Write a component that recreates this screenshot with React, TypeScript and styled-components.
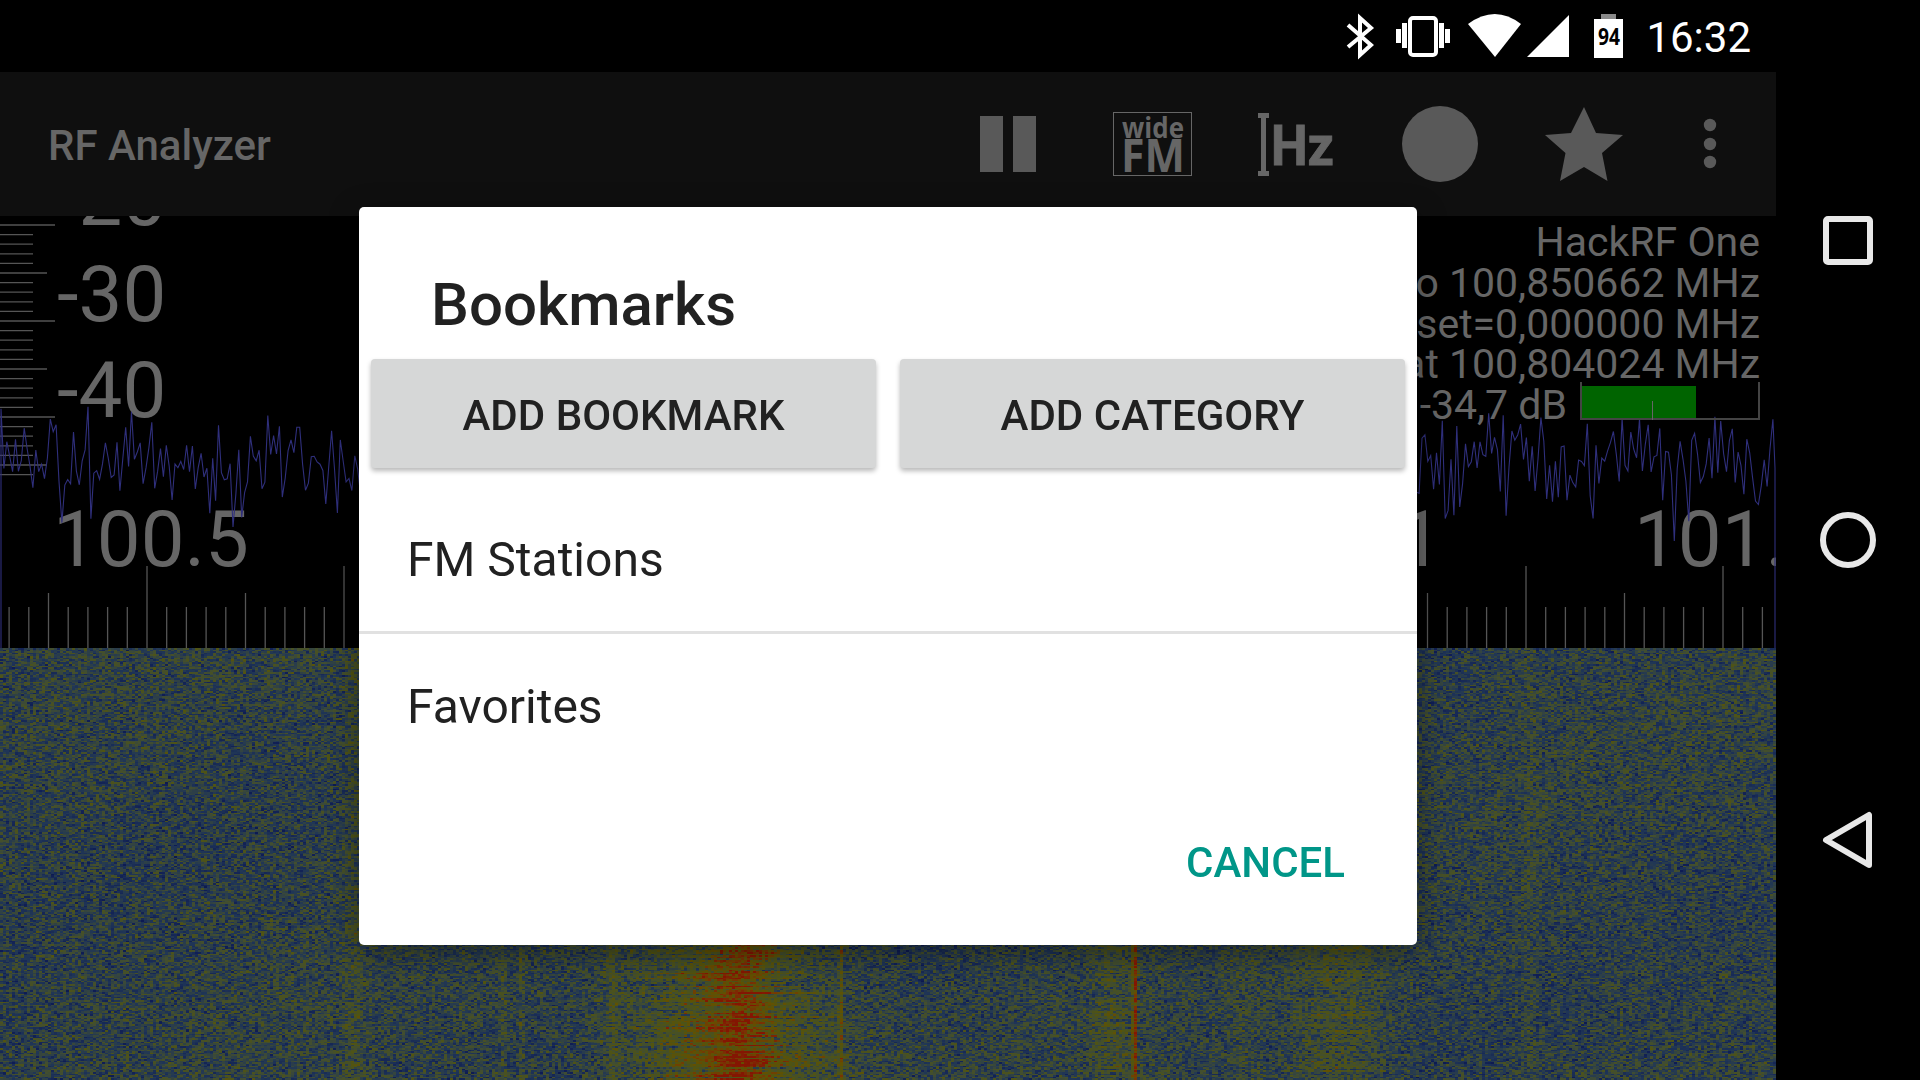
import React, { useEffect, useRef } from 'react'
import styled, { createGlobalStyle } from 'styled-components'

const GlobalStyle = createGlobalStyle`
  html, body {
    margin: 0;
    background: #000;
    overflow: hidden;
  }
`

const Screen = styled.div`
  position: relative;
  display: flex;
  width: 1920px;
  height: 1080px;
  background: #000;
  font-family: Roboto, 'Liberation Sans', sans-serif;
  overflow: hidden;
`
const Main = styled.div`
  display: flex;
  flex-direction: column;
  width: 1776px;
  height: 100%;
`
const StatusBar = styled.div`
  display: flex;
  align-items: center;
  justify-content: flex-end;
  height: 72px;
  padding-right: 25px;
`
const StatusIcon = styled.svg`
  display: block;
  height: 72px;
  fill: #fff;
`
const StatusTime = styled.span`
  margin-left: 22px;
  padding-top: 3px;
  font-size: 42px;
  line-height: 69px;
  color: #fff;
`
const BatteryText = styled.text`
  font-family: 'Open Sans', sans-serif;
  font-weight: 700;
  font-size: 23px;
  fill: #000;
`
const Toolbar = styled.div`
  display: flex;
  align-items: center;
  height: 144px;
  padding-right: 12px;
  background: #0f0f0f;
`
const ToolbarTitle = styled.div`
  flex: 1;
  padding: 3px 0 0 48px;
  font-size: 42px;
  font-weight: 500;
  color: #666;
`
const ActionIcon = styled.svg<{ $width?: number }>`
  display: block;
  width: ${({ $width }) => $width ?? 144}px;
  height: 144px;
  fill: #595959;
`
const WideText = styled.text`
  font-family: 'Open Sans', sans-serif;
  font-weight: 700;
  font-size: 29px;
  fill: #666;
`
const FmText = styled.text`
  font-family: 'Open Sans', sans-serif;
  font-weight: 700;
  font-size: 46px;
  fill: #666;
`
const HzText = styled.text`
  font-family: Roboto, sans-serif;
  font-weight: 700;
  font-size: 56px;
  fill: #666;
  stroke: #666;
  stroke-width: 1;
`
const Analyzer = styled.div`
  position: relative;
  height: 432px;
  overflow: hidden;
`
const Chart = styled.svg`
  display: block;
  width: 1776px;
  height: 432px;
`
const AxisLabel = styled.text`
  font-family: Roboto, sans-serif;
  font-size: 78px;
  fill: #666;
`
const InfoPanel = styled.div`
  position: absolute;
  top: 6px;
  right: 0;
  padding-right: 16px;
  font-size: 41px;
  line-height: 40.8px;
  color: #666;
  text-align: right;
  white-space: nowrap;
`
const InfoLine = styled.div`
  display: flex;
  justify-content: flex-end;
`
const Meter = styled.div`
  position: relative;
  box-sizing: border-box;
  width: 180px;
  height: 38px;
  margin-left: 13px;
  transform: translateY(-3px);
  border: 2px solid #444;
  border-top: 0;
  &::after {
    content: '';
    position: absolute;
    left: 70px;
    bottom: -2px;
    width: 1px;
    height: 19px;
    background: #666;
  }
`
const MeterFill = styled.div<{ $level: number }>`
  width: ${({ $level }) => $level}%;
  height: 32px;
  margin-top: 4px;
  background: #006400;
`
const Waterfall = styled.canvas`
  display: block;
  width: 1776px;
  height: 432px;
  image-rendering: pixelated;
`
const NavBar = styled.div`
  display: flex;
  flex-direction: column;
  justify-content: center;
  width: 144px;
`
const NavIcon = styled.svg`
  display: block;
  width: 144px;
  height: 300px;
  fill: none;
  stroke: #e8e8e8;
  stroke-width: 6;
  stroke-linejoin: round;
`
const Dialog = styled.div`
  position: absolute;
  left: 359px;
  top: 207px;
  width: 1058px;
  height: 738px;
  display: flex;
  flex-direction: column;
  background: #fff;
  border-radius: 5px;
  box-shadow: 0 8px 30px rgba(0, 0, 0, 0.4);
`
const DialogTitle = styled.div`
  padding: 56px 0 12px 72px;
  font-size: 60px;
  line-height: 84px;
  font-weight: 500;
  color: #212121;
`
const ButtonRow = styled.div`
  display: flex;
  gap: 24px;
  padding: 0 12px;
`
const RaisedButton = styled.div`
  flex: 1;
  display: flex;
  align-items: center;
  justify-content: center;
  box-sizing: border-box;
  height: 109px;
  padding-top: 4px;
  background: #d6d7d7;
  border-radius: 4px;
  box-shadow: 0 3px 5px rgba(0, 0, 0, 0.28);
  font-size: 42px;
  font-weight: 500;
  color: #212121;
`
const List = styled.div`
  margin-top: 19px;
`
const ListRow = styled.div`
  display: flex;
  align-items: center;
  height: 144px;
  padding-left: 48px;
  font-size: 48px;
  color: #212121;
  & + & {
    border-top: 3px solid #e1e1e1;
  }
`
const Footer = styled.div`
  flex: 1;
  display: flex;
  align-items: center;
  justify-content: flex-end;
  padding: 2px 72px 0 0;
`
const CancelButton = styled.div`
  font-size: 42px;
  font-weight: 500;
  color: #009688;
`

const random = (seed: number) => () => {
  seed = (seed + 0x6d2b79f5) | 0
  let t = Math.imul(seed ^ (seed >>> 15), 1 | seed)
  t = (t + Math.imul(t ^ (t >>> 7), 61 | t)) ^ t
  return ((t ^ (t >>> 14)) >>> 0) / 4294967296
}

const ramp: [number, number, number, number][] = [
  [0, 6, 10, 50],
  [0.25, 14, 28, 84],
  [0.42, 32, 54, 86],
  [0.55, 66, 78, 48],
  [0.68, 80, 84, 18],
  [0.8, 100, 80, 0],
  [0.9, 122, 50, 4],
  [1, 132, 22, 2],
]

const colorAt = (v: number) => {
  const c = Math.min(1, Math.max(0, v))
  for (let i = 1; i < ramp.length; i++) {
    if (c <= ramp[i][0]) {
      const a = ramp[i - 1]
      const b = ramp[i]
      const t = (c - a[0]) / (b[0] - a[0])
      return [a[1] + (b[1] - a[1]) * t, a[2] + (b[2] - a[2]) * t, a[3] + (b[3] - a[3]) * t]
    }
  }
  return ramp[ramp.length - 1].slice(1)
}

const bump = (x: number, center: number, width: number) => Math.exp(-(((x - center) / width) ** 2))

const WaterfallView: React.FC = () => {
  const ref = useRef<HTMLCanvasElement>(null)

  useEffect(() => {
    const canvas = ref.current
    const ctx = canvas?.getContext('2d')
    if (!canvas || !ctx) return
    const rnd = random(42)
    const image = ctx.createImageData(canvas.width, canvas.height)
    const cellWidth = 1776 / canvas.width
    for (let row = 0; row < canvas.height; row++) {
      const streak = rnd()
      const shift = (rnd() - 0.5) * 30
      const side = rnd()
      for (let col = 0; col < canvas.width; col++) {
        const x = col * cellWidth
        const noise = (rnd() + rnd() + rnd() - 1.5) * 0.18
        let v = 0.47 + noise
        v += 0.015 * Math.sin(x / 130 + row / 40)
        v += 0.24 * bump(x, 738 + shift, 24)
        v += (0.06 + streak * 0.34) * bump(x, 728 + shift, 88)
        v += 0.1 * bump(x, 612, 6) + 0.1 * bump(x, 502, 2.5) + 0.1 * bump(x, 520, 2.5)
        v += 0.36 * bump(x, 839, 1.6) + 0.5 * bump(x, 1133, 2)
        v += side * 0.2 * bump(x, 1110, 22)
        v += (0.02 + side * 0.18) * bump(x, 1337, 42)
        v += 0.04 * bump(x, 1240, 20)
        v += (0.03 + side * 0.1) * bump(x, 352, 10)
        v += 0.04 * bump(x, 1528, 8)
        const [r, g, b] = colorAt(v)
        const i = (row * canvas.width + col) * 4
        image.data[i] = r
        image.data[i + 1] = g
        image.data[i + 2] = b
        image.data[i + 3] = 255
      }
    }
    ctx.putImageData(image, 0, 0)
  }, [])

  return <Waterfall ref={ref} width={592} height={270} />
}

const buildTrace = () => {
  const rnd = random(7)
  const points: string[] = ['M1 648', 'L1 468']
  for (let x = 1; x < 1775; x += 2.9) {
    let g = (rnd() + rnd() - 1) * 52
    if (rnd() < 0.14) g += 24 + rnd() * 22
    points.push(`L${x.toFixed(1)} ${(457 + g).toFixed(1)}`)
  }
  points.push('L1775 468', 'L1775 648')
  return points.join(' ')
}

const tracePath = buildTrace()

const SpectrumChart: React.FC = () => {
  const yTicks = Array.from({ length: 27 }, (_, i) => {
    const len = i % 10 === 0 ? 55 : i % 5 === 0 ? 47 : 33
    return <line key={i} x1={0} x2={len} y1={225 + i * 9.6} y2={225 + i * 9.6} />
  })
  const xTicks = Array.from({ length: 90 }, (_, i) => {
    const x = 147 + (i - 7) * 19.7
    const top = (i - 7) % 10 === 0 ? 566 : (i - 7) % 5 === 0 ? 593 : 607
    return <line key={i} x1={x} x2={x} y1={top} y2={648} />
  })

  return (
    <Chart viewBox="0 216 1776 432">
      <g stroke="#555" strokeWidth={1.3}>
        {yTicks}
        {xTicks}
      </g>
      <AxisLabel x={57} y={225}>-20</AxisLabel>
      <AxisLabel x={57} y={321}>-30</AxisLabel>
      <AxisLabel x={57} y={417}>-40</AxisLabel>
      <AxisLabel x={151} y={566} textAnchor="middle">100.5</AxisLabel>
      <AxisLabel x={1442} y={566} textAnchor="end">1</AxisLabel>
      <AxisLabel x={1732} y={566} textAnchor="middle">101.0</AxisLabel>
      <path d={tracePath} fill="none" stroke="#2f2f7c" strokeWidth={1.1} />
    </Chart>
  )
}

const App: React.FC = () => {
  return (
    <Screen>
      <GlobalStyle />
      <Main>
        <StatusBar>
          <StatusIcon viewBox="1340 0 48 72" width={48}>
            <path d="M1349 25L1372 45L1361 55V18L1372 28L1349 47" fill="none" stroke="#fff" strokeWidth={4} />
          </StatusIcon>
          <StatusIcon viewBox="1388 0 74 72" width={74}>
            <rect x={1411} y={18} width={26} height={37} rx={3} fill="none" stroke="#fff" strokeWidth={4} />
            <rect x={1397} y={29} width={5} height={14} />
            <rect x={1403} y={23} width={5} height={25} />
            <rect x={1440} y={23} width={5} height={25} />
            <rect x={1446} y={29} width={5} height={14} />
          </StatusIcon>
          <StatusIcon viewBox="1462 0 66 72" width={66}>
            <path d="M1496 57L1469 24Q1496 4 1522 24Z" />
          </StatusIcon>
          <StatusIcon viewBox="1528 0 64 72" width={64}>
            <path d="M1528 57H1570V15Z" />
          </StatusIcon>
          <StatusIcon viewBox="1592 0 33 72" width={33}>
            <rect x={1602} y={14} width={15} height={5} fill="#8a8a8a" />
            <rect x={1595} y={19} width={29} height={39} />
            <BatteryText x={1610} y={45} textAnchor="middle" textLength={22} lengthAdjust="spacingAndGlyphs">94</BatteryText>
          </StatusIcon>
          <StatusTime>16:32</StatusTime>
        </StatusBar>

        <Toolbar>
          <ToolbarTitle>RF Analyzer</ToolbarTitle>
          <ActionIcon viewBox="936 72 144 144">
            <rect x={980} y={116} width={23} height={56} />
            <rect x={1013} y={116} width={23} height={56} />
          </ActionIcon>
          <ActionIcon viewBox="1080 72 144 144">
            <rect x={1113.5} y={112.5} width={78} height={63} fill="none" stroke="#666" />
            <WideText x={1122} y={138} textLength={62} lengthAdjust="spacingAndGlyphs">wide</WideText>
            <FmText x={1121} y={172} textLength={64} lengthAdjust="spacingAndGlyphs">FM</FmText>
          </ActionIcon>
          <ActionIcon viewBox="1224 72 144 144">
            <path d="M1258 113H1269V118H1266V171H1269V176H1258V171H1261V118H1258Z" fill="#666" />
            <HzText x={1271} y={165} textLength={63} lengthAdjust="spacingAndGlyphs">Hz</HzText>
          </ActionIcon>
          <ActionIcon viewBox="1368 72 144 144">
            <circle cx={1440} cy={144} r={38} />
          </ActionIcon>
          <ActionIcon viewBox="1512 72 144 144">
            <path d="M1584 107L1596 133L1623 135L1602 153L1607.5 181L1584 167L1560 181L1565.5 153L1545 135L1571 133Z" />
          </ActionIcon>
          <ActionIcon viewBox="1656 72 108 144" $width={108}>
            <circle cx={1710} cy={125} r={6.2} />
            <circle cx={1710} cy={144} r={6.2} />
            <circle cx={1710} cy={162} r={6.2} />
          </ActionIcon>
        </Toolbar>

        <Analyzer>
          <SpectrumChart />
          <InfoPanel>
            <InfoLine>HackRF One</InfoLine>
            <InfoLine>o 100,850662 MHz</InfoLine>
            <InfoLine>set=0,000000 MHz</InfoLine>
            <InfoLine>at 100,804024 MHz</InfoLine>
            <InfoLine>
              -34,7 dB
              <Meter>
                <MeterFill $level={65} />
              </Meter>
            </InfoLine>
          </InfoPanel>
        </Analyzer>

        <WaterfallView />
      </Main>

      <NavBar>
        <NavIcon viewBox="0 90 144 300">
          <rect x={50} y={219} width={44} height={43} rx={2} />
        </NavIcon>
        <NavIcon viewBox="0 390 144 300">
          <circle cx={72} cy={540} r={25} />
        </NavIcon>
        <NavIcon viewBox="0 690 144 300">
          <path d="M93 815V865L50 840Z" />
        </NavIcon>
      </NavBar>

      <Dialog>
        <DialogTitle>Bookmarks</DialogTitle>
        <ButtonRow>
          <RaisedButton>ADD BOOKMARK</RaisedButton>
          <RaisedButton>ADD CATEGORY</RaisedButton>
        </ButtonRow>
        <List>
          <ListRow>FM Stations</ListRow>
          <ListRow>Favorites</ListRow>
        </List>
        <Footer>
          <CancelButton>CANCEL</CancelButton>
        </Footer>
      </Dialog>
    </Screen>
  )
}

export default App
